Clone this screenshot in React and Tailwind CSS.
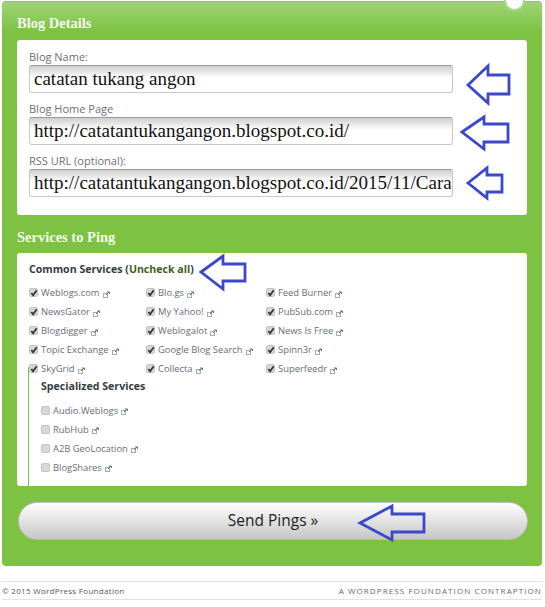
const common = [
  ['Weblogs.com', 'Blo.gs', 'Feed Burner'],
  ['NewsGator', 'My Yahoo!', 'PubSub.com'],
  ['Blogdigger', 'Weblogalot', 'News Is Free'],
  ['Topic Exchange', 'Google Blog Search', 'Spinn3r'],
  ['SkyGrid', 'Collecta', 'Superfeedr'],
]
const specialized = ['Audio.Weblogs', 'RubHub', 'A2B GeoLocation', 'BlogShares']

const fields = [
  ['Blog Name:', 'catatan tukang angon'],
  ['Blog Home Page', 'http://catatantukangangon.blogspot.co.id/'],
  ['RSS URL (optional):', 'http://catatantukangangon.blogspot.co.id/2015/11/Cara-Ping'],
]

const arrows = [
  '468,85 488,66 488,75 509,75 509,94 488,94 488,103',
  '462,132 484,117 484,124 508,124 508,142 484,142 484,149',
  '468,183 487,168 487,175 502,175 502,192 487,192 487,198',
  '201,272 223,256 223,264 245,264 245,281 223,281 223,289',
  '360,523 392,506 392,514 424,514 424,532 392,532 392,540',
]

function LinkIcon() {
  return (
    <svg width="7" height="7" viewBox="0 0 7 7" className="ml-[3px] mt-[2px] shrink-0" fill="none">
      <rect x="0.5" y="2.5" width="4" height="4" stroke="#a3b0a3" />
      <path d="M3 4 L6 1 M4 1 H6.5 V3" stroke="#5c7a5c" />
    </svg>
  )
}

function Check({ checked }) {
  return (
    <span className="w-[9px] h-[9px] -mt-[1px] rounded-[2px] border border-[#c4c4c4] bg-[#d8d8d8] shrink-0 flex items-center justify-center">
      {checked && (
        <svg width="8" height="8" viewBox="0 0 9 9" fill="none" className="shrink-0">
          <path d="M1.5 4.5 L3.5 7 L7.5 1.5" stroke="#333" strokeWidth="2" />
        </svg>
      )}
    </span>
  )
}

function Service({ name, checked, className }) {
  return (
    <div className={`flex items-center text-[9.4px] leading-[12px] text-[#666e78] ${className}`}>
      <Check checked={checked} />
      <span className="ml-[3px] whitespace-nowrap">{name}</span>
      <LinkIcon />
    </div>
  )
}

export default function App() {
  return (
    <div className="relative w-[545px] h-[607px] bg-white overflow-hidden font-['Open_Sans',sans-serif]">
      <div className="relative ml-[2px] mt-[1px] w-[540px] h-[565px] rounded-[4px] border-t border-t-[#a3b59a] bg-[#7dc243] bg-gradient-to-b from-[#9dd474] to-[#7dc243] bg-[length:100%_30px] bg-no-repeat px-[15px]">
        <div className="absolute right-[17px] -top-[12px] w-[21px] h-[21px] rounded-full bg-white border-2 border-[#a9da85]" />

        <h2 className="pt-[13px] h-[38px] font-['Liberation_Serif',serif] font-bold text-[14.5px] leading-[17px] text-[#f4faef]">Blog Details</h2>
        <div className="h-[175px] rounded-[3px] bg-white px-[12px] pt-[10px]">
          {fields.map(([label, value]) => (
            <label key={label} className="block mb-[9px]">
              <span className="block h-[15px] text-[11px] leading-[13px] text-[#6b7078]">{label}</span>
              <input
                readOnly
                value={value}
                className="block w-[424px] h-[28px] rounded-[3px] border border-[#c8c8c8] border-t-[#999] bg-gradient-to-b from-[#cfcfcf] to-white to-[45%] pl-[4px] pr-[1px] font-['Liberation_Serif',serif] text-[19px] text-[#111] outline-none"
              />
            </label>
          ))}
        </div>

        <h2 className="pt-[14px] h-[38px] font-['Liberation_Serif',serif] font-bold text-[14.5px] leading-[17px] text-[#f4faef]">Services to Ping</h2>
        <div className="h-[233px] rounded-[3px] bg-white px-[12px] pt-[9px] overflow-hidden">
          <h3 className="h-[25px] text-[10.6px] leading-[14px] font-bold text-[#333c44]">
            Common Services (<span className="text-[#3f5f22]">Uncheck all</span>)
          </h3>
          <div className="flex flex-col">
            {common.map((row) => (
              <div key={row[0]} className="flex h-[19px] items-start">
                <Service name={row[0]} checked className="w-[117px]" />
                <Service name={row[1]} checked className="w-[120px]" />
                <Service name={row[2]} checked className="w-[120px]" />
              </div>
            ))}
          </div>
          <div className="-ml-[1px] -mt-[15px] h-[119px] border-l-[1.5px] border-[#7dc243] pl-[12px] pt-[12px]">
            <h3 className="h-[22px] text-[10.6px] leading-[14px] font-bold text-[#333c44]">Specialized Services</h3>
            {specialized.map((name) => (
              <Service key={name} name={name} className="h-[19px]" />
            ))}
          </div>
        </div>

        <button className="block w-[510px] h-[38px] mt-[16px] ml-[1px] rounded-full border border-[#bbb] bg-gradient-to-b from-white to-[#c6c6c6] text-[15.5px] text-[#222]">
          Send Pings »
        </button>
      </div>

      <footer className="ml-[2px] mt-[15px] w-[540px] h-[19px] border-y border-[#e2e2e2] flex items-center justify-between text-[8px] text-[#555]">
        <span className="tracking-[0.3px]">© 2015 WordPress Foundation</span>
        <span className="tracking-[1.1px] text-[#667]">A WORDPRESS FOUNDATION CONTRAPTION</span>
      </footer>

      <svg className="absolute inset-0 pointer-events-none" width="545" height="607" fill="none">
        {arrows.map((points) => (
          <polygon key={points} points={points} stroke="#3b48cc" strokeWidth="2.8" />
        ))}
      </svg>
    </div>
  )
}
